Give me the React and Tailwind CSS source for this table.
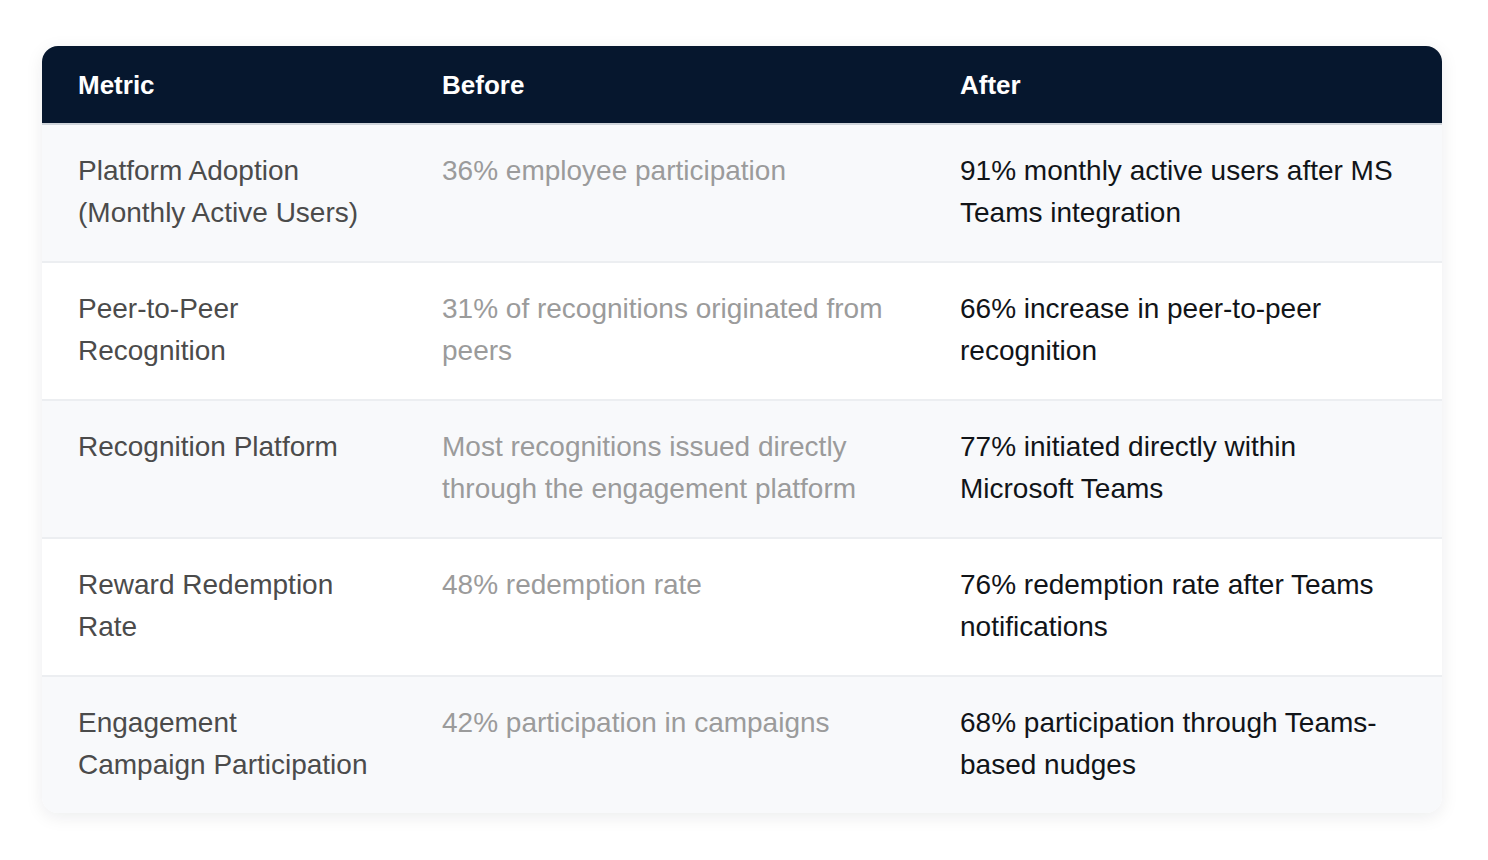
import React from 'react';

const rows = [
  {
    metric: 'Platform Adoption (Monthly Active Users)',
    before: '36% employee participation',
    after: '91% monthly active users after MS Teams integration',
  },
  {
    metric: 'Peer-to-Peer Recognition',
    before: '31% of recognitions originated from peers',
    after: '66% increase in peer-to-peer recognition',
  },
  {
    metric: 'Recognition Platform',
    before: 'Most recognitions issued directly through the engagement platform',
    after: '77% initiated directly within Microsoft Teams',
  },
  {
    metric: 'Reward Redemption Rate',
    before: '48% redemption rate',
    after: '76% redemption rate after Teams notifications',
  },
  {
    metric: 'Engagement Campaign Participation',
    before: '42% participation in campaigns',
    after: '68% participation through Teams-based nudges',
  },
];

const App = () => {
  return (
    <div className="min-h-screen bg-white px-[42px] pt-[46px] font-['Liberation_Sans',Arial,sans-serif]">
      <div className="w-[1400px] overflow-hidden rounded-2xl shadow-[0_4px_18px_rgba(15,23,42,0.08)]">
        <table className="w-full table-fixed border-collapse text-left">
          <colgroup>
            <col className="w-[364px]" />
            <col className="w-[518px]" />
            <col className="w-[518px]" />
          </colgroup>
          <thead>
            <tr className="h-[78px] border-b-2 border-[#cfd4da] bg-[#06172e] text-[26px] font-bold text-white">
              <th className="pl-9 pt-[2px]">Metric</th>
              <th className="pl-9 pt-[2px]">Before</th>
              <th className="pl-9 pt-[2px]">After</th>
            </tr>
          </thead>
          <tbody className="text-[28px] leading-[42px]">
            {rows.map((r, i) => (
              <tr
                key={r.metric}
                className={
                  (i % 2 === 0 ? 'bg-[#f8f9fb]' : 'bg-white') +
                  (i < rows.length - 1 ? ' border-b-2 border-[#eceef1]' : '')
                }
              >
                <td className="h-[136px] pb-[27px] pl-9 pr-9 pt-[25px] align-top text-[#4b4b4b]">{r.metric}</td>
                <td className="pb-[27px] pl-9 pr-9 pt-[25px] align-top text-[#9b9b9b]">{r.before}</td>
                <td className="pb-[27px] pl-9 pr-9 pt-[25px] align-top text-[#111418]">{r.after}</td>
              </tr>
            ))}
          </tbody>
        </table>
      </div>
    </div>
  );
};

export default App;
